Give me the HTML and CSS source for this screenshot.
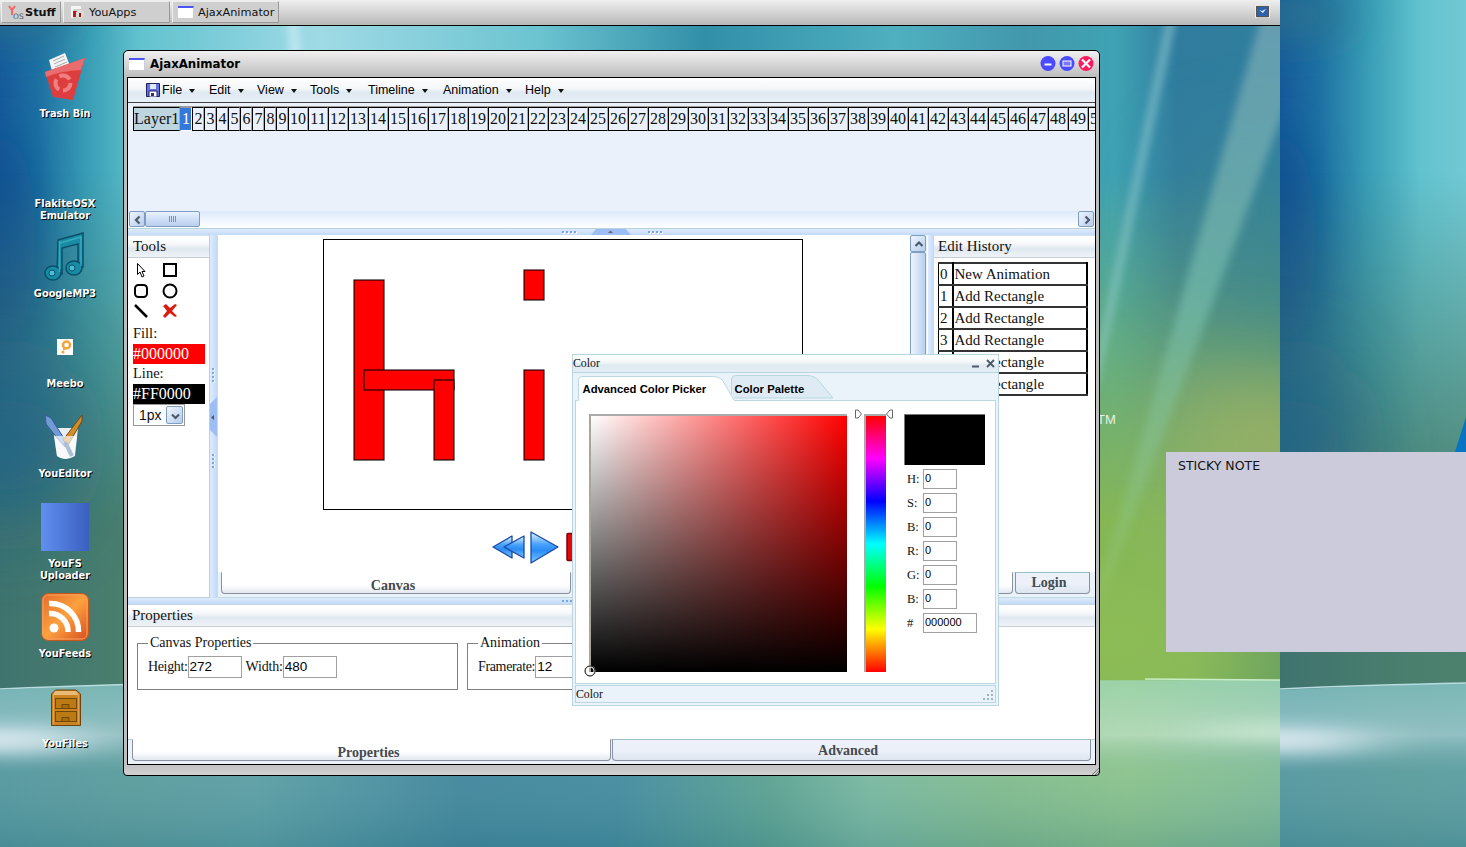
FILE: index.html
```html
<!DOCTYPE html>
<html lang="en">
<head>
<meta charset="utf-8">
<title>YouOS</title>
<link rel="stylesheet" href="styles.css">
</head>
<body>
<svg class="wallpaper" width="1466" height="847" viewBox="0 0 1466 847">
  <defs>
    <filter id="b3" filterUnits="userSpaceOnUse" x="-200" y="-200" width="1700" height="1300"><feGaussianBlur stdDeviation="4"/></filter>
    <filter id="b20" filterUnits="userSpaceOnUse" x="-200" y="-200" width="1700" height="1300"><feGaussianBlur stdDeviation="22"/></filter>
    <filter id="bflat" filterUnits="userSpaceOnUse" x="-200" y="-200" width="1700" height="1300"><feGaussianBlur stdDeviation="40 9"/></filter>
    <filter id="b50" filterUnits="userSpaceOnUse" x="-200" y="-200" width="1700" height="1300"><feGaussianBlur stdDeviation="45"/></filter>
    <linearGradient id="sky"><stop offset="0" stop-color="#155a9a"/><stop offset=".03" stop-color="#1d70a2"/><stop offset=".07" stop-color="#3a9fb6"/><stop offset=".11" stop-color="#62c3cf"/><stop offset=".25" stop-color="#9fdae6"/><stop offset=".42" stop-color="#6cc4d0"/><stop offset=".55" stop-color="#318fa8"/><stop offset=".7" stop-color="#4fb0c0"/><stop offset=".8" stop-color="#4297ac"/><stop offset=".87" stop-color="#3fa3b4"/><stop offset=".92" stop-color="#307c9e"/><stop offset="1" stop-color="#307f9e"/></linearGradient>
    <linearGradient id="land"><stop offset="0" stop-color="#3f736e"/><stop offset=".1" stop-color="#4a7f6e"/><stop offset=".5" stop-color="#5a9068"/><stop offset=".86" stop-color="#85b655"/><stop offset=".93" stop-color="#85b65c"/><stop offset="1" stop-color="#6fa45f"/></linearGradient>
    <linearGradient id="fade" x2="0" y2="1"><stop offset=".25" stop-color="#fff" stop-opacity="0"/><stop offset=".75" stop-color="#fff"/></linearGradient>
    <mask id="lower"><rect width="1280" height="690" fill="url(#fade)"/></mask>
    <linearGradient id="sea"><stop offset="0" stop-color="#589aa2"/><stop offset=".1" stop-color="#5f9fa0"/><stop offset=".2" stop-color="#60a2a8"/><stop offset=".36" stop-color="#4589a0"/><stop offset=".48" stop-color="#478da2"/><stop offset=".6" stop-color="#60a594"/><stop offset=".68" stop-color="#80bda4"/><stop offset=".78" stop-color="#88c090"/><stop offset=".88" stop-color="#91c78e"/><stop offset="1" stop-color="#86bf9b"/></linearGradient>
    <linearGradient id="shine" x2="0" y2="1"><stop offset="0" stop-color="#b8eee0" stop-opacity=".3"/><stop offset=".33" stop-color="#effaff" stop-opacity=".35"/><stop offset=".55" stop-color="#7cb0b0" stop-opacity=".08"/><stop offset="1" stop-color="#1a6575" stop-opacity=".25"/></linearGradient>
    <linearGradient id="ray" x2="0" y2="1"><stop offset="0" stop-color="#8bb1bd" stop-opacity=".6"/><stop offset=".5" stop-color="#78bfae" stop-opacity=".65"/><stop offset="1" stop-color="#98ca75" stop-opacity=".35"/></linearGradient>
    <g id="scene">
      <rect width="1280" height="847" fill="url(#sky)"/>
      <ellipse cx="0" cy="240" rx="35" ry="110" fill="#10508f" filter="url(#b20)" opacity=".7"/>
      <ellipse cx="5" cy="15" rx="70" ry="18" fill="#2d748c" filter="url(#b20)"/>
      <rect width="1280" height="690" fill="url(#land)" mask="url(#lower)"/>
      <ellipse cx="5" cy="445" rx="60" ry="80" fill="#1f628a" filter="url(#b50)" opacity=".85"/>
      <ellipse cx="1265" cy="440" rx="100" ry="65" fill="#9cb365" filter="url(#b50)"/>
      <ellipse cx="1120" cy="640" rx="100" ry="55" fill="#8fbe55" filter="url(#b50)"/>
      <ellipse cx="1240" cy="210" rx="60" ry="65" fill="#438b8f" filter="url(#b50)" opacity=".6"/>
      <path d="M295 0L302 60L290 60L287 0Z" fill="#d9f3fa" opacity=".6" filter="url(#b3)"/>
      <path d="M1168 15L1085 415L1098 380L1176 15Z" fill="#a5d6da" opacity=".6" filter="url(#b3)"/>
      <path d="M1266 0L1100 585L1098 610L1290 95L1295 0Z" fill="url(#ray)" filter="url(#b3)"/>
      <path d="M0 690Q110 684 250 682L1280 680V847H0Z" fill="url(#sea)"/>
      <path d="M0 690Q110 684 250 682L1280 680V847H0Z" fill="url(#shine)"/>
      <ellipse cx="0" cy="741" rx="90" ry="13" fill="#f4faff" opacity=".8" filter="url(#bflat)"/>
      <ellipse cx="1280" cy="731" rx="80" ry="7" fill="#f4ffee" opacity=".6" filter="url(#bflat)"/>
      <path d="M0 689Q110 684 250 682" fill="none" stroke="#b8dce0" stroke-width="1.5"/>
      <path d="M1145 679L1280 680" stroke="#c8efc8" stroke-width="1.500"/>
    </g>
    <clipPath id="tile"><rect width="1280" height="847"/></clipPath>
  </defs>
  <g clip-path="url(#tile)"><use href="#scene"/></g>
  <g transform="translate(1280)" clip-path="url(#tile)"><use href="#scene"/></g>
  <path d="M1466 417L1455 452H1466Z" fill="#0875c4"/>
  <text x="1097" y="424" class="tm">TM</text>
</svg>

<header class="taskbar">
  <div class="task task-start"><svg width="18" height="18"><path d="M2 3L5 7L8 3M5 7V12" fill="none" stroke="#ff6060" stroke-width="2"/><text x="6" y="16" class="os">OS</text></svg><b>Stuff</b></div>
  <div class="task"><svg width="16" height="16"><path d="M2 2h10v3H4v9H2z" fill="#f5f5f5"/><path d="M4 7h7v1H7v5H4z" fill="#c01818"/><circle cx="11" cy="10" r="4" fill="#ddd"/><path d="M10 9h2v4h-2z" fill="#a01010"/></svg><span class="gap-s">YouApps</span></div>
  <div class="task"><i class="winicon"></i><span>AjaxAnimator</span></div>
  <svg class="tray" width="15" height="13"><path d="M1 0V13M14 0V13" stroke="#eee" stroke-width="2"/><rect x="1.5" y="1.500" width="12" height="10" fill="#2f62ad" stroke="#555"/><path d="M4 5l3 1 4-2-3 4z" fill="#e7f2ff"/></svg>
</header>

<nav class="desktop">
  <div class="dicon"><svg width="50" height="50" viewBox="0 0 50 50"><path d="M9 8L25 1L30 14L12 19Z" fill="#f4f4f4"/><path d="M13 9l11-5M14 12l11-5M15 15l12-5" stroke="#aaa"/><path d="M5 20L45 6L33 48L13 45Z" fill="#de3d40"/><path d="M5 20L45 6L41 18Q20 19 6 25Z" fill="#e96d6f"/><circle cx="23" cy="31" r="7.500" fill="none" stroke="#ee8080" stroke-width="4" stroke-dasharray="11.700 4"/></svg><span>Trash Bin</span></div>
  <div class="dicon"><svg width="50" height="50"></svg><span>FlakiteOSX<br>Emulator</span></div>
  <div class="dicon"><svg width="50" height="50" viewBox="0 0 50 50"><g fill="#188ba5" stroke="#0a4f69" stroke-width="1.500"><path d="M18 8L43 1V35H38V12L22 16V42H17Z"/><ellipse cx="13" cy="41" rx="8" ry="7"/><ellipse cx="34" cy="36" rx="8" ry="7"/></g><path d="M19.500 9V40M41 4V34M20 11L41 5" stroke="#38aabf" stroke-width="1.500" fill="none"/><circle cx="12" cy="41" r="3" fill="#46bfd0" stroke="#0a4f69"/><circle cx="32" cy="36" r="3" fill="#46bfd0" stroke="#0a4f69"/></svg><span>GoogleMP3</span></div>
  <div class="dicon"><svg width="50" height="50"><rect x="17" y="17" width="16" height="16" fill="#fff"/><circle cx="26.500" cy="23" r="3.500" fill="none" stroke="#f3a33b" stroke-width="2.500"/><path d="M24 25v3" stroke="#f3a33b" stroke-width="2"/><circle cx="23" cy="30" r="1.500" fill="#f3a33b"/></svg><span>Meebo</span></div>
  <div class="dicon"><svg width="50" height="50" viewBox="0 0 50 50"><path d="M13 16H38L35 44Q25 50 17 44Z" fill="#e8eef1"/><path d="M5 3L11 6L25 28V35L18 27L6 12Z" fill="#719bd5" stroke="#365a96"/><path d="M42 3V9L28 33L23 28Z" fill="#d08d2c" stroke="#79480d"/><path d="M14 24H37L34 44Q25 50 17 44Z" fill="#fff" opacity=".65"/><path d="M25 30L32 44" stroke="#aebfd5" stroke-width="4"/></svg><span>YouEditor</span></div>
  <div class="dicon"><svg width="50" height="50"><defs><linearGradient id="fs"><stop stop-color="#618ff0"/><stop offset="1" stop-color="#3a5fbf"/></linearGradient></defs><rect x="1" y="1" width="48" height="48" fill="url(#fs)"/></svg><span>YouFS<br>Uploader</span></div>
  <div class="dicon"><svg width="50" height="50"><defs><linearGradient id="rss" x2="1" y2="1"><stop stop-color="#e36b2c"/><stop offset=".5" stop-color="#fda13e"/><stop offset="1" stop-color="#d44c20"/></linearGradient></defs><rect x="1.500" y="1.500" width="47" height="47" rx="7" fill="url(#rss)" stroke="#c95618"/><rect x="3" y="3" width="44" height="44" rx="5" fill="none" stroke="#f8a15e"/><circle cx="14" cy="36" r="4.500" fill="#fff"/><path d="M9 21.500A18 18 0 0 1 28 40M9 11.500A28 28 0 0 1 38.500 40" fill="none" stroke="#fff" stroke-width="5.500"/></svg><span>YouFeeds</span></div>
  <div class="dicon"><svg width="50" height="50"><path d="M15.500 8H36L40.500 12V43.500H11.500V12Z" fill="#cc8322" stroke="#6f4210"/><path d="M15 9H36L39 13H13Z" fill="#e9bb76"/><path d="M13.500 13V42M38.500 13V42" stroke="#e2a04a"/><rect x="15.500" y="16.500" width="21" height="10" fill="#bb7a14" stroke="#6e4909"/><rect x="15.500" y="29.500" width="21" height="10" fill="#bb7a14" stroke="#6e4909"/><path d="M22 26v-3.500h7V26M22 39v-3.500h7V39" fill="#a96b0c" stroke="#6e4909"/></svg><span>YouFiles</span></div>
</nav>

<main class="window">
  <div class="titlebar"><i class="winicon"></i><b>AjaxAnimator</b>
    <svg class="winbtns" width="55" height="17"><circle cx="8" cy="8.500" r="7.500" fill="#4a4aff"/><path d="M4.500 9.500h7" stroke="#fff" stroke-width="2"/><circle cx="27" cy="8.500" r="7.500" fill="#4a4aff"/><rect x="23" y="6" width="8" height="5" fill="#7878ff" stroke="#fff"/><circle cx="46" cy="8.500" r="7.500" fill="#ff1a5f"/><path d="M42 4.500l8 8M50 4.500l-8 8" stroke="#fff" stroke-width="2.200"/></svg>
  </div>
  <div class="app">
    <div class="menubar">
      <span class="m-file"><svg width="14" height="14"><path d="M.5.500h13v13H.5z" fill="#6672e0" stroke="#202060"/><path d="M4 1h6v5H4z" fill="#dfe6ff"/><path d="M3 8h8v6H3z" fill="#fff" stroke="#202060"/><path d="M5 10h3v3H5z" fill="#303070"/></svg>File<i></i></span><span class="m-edit">Edit<i></i></span><span class="m-view">View<i></i></span><span class="m-tools">Tools<i></i></span><span class="m-time">Timeline<i></i></span><span class="m-anim">Animation<i></i></span><span>Help<i></i></span>
    </div>
    <div class="timeline">
      <div class="frames"><b>Layer1</b><em>1</em><s>2</s><s>3</s><s>4</s><s>5</s><s>6</s><s>7</s><s>8</s><s>9</s><u>10</u><u>11</u><u>12</u><u>13</u><u>14</u><u>15</u><u>16</u><u>17</u><u>18</u><u>19</u><u>20</u><u>21</u><u>22</u><u>23</u><u>24</u><u>25</u><u>26</u><u>27</u><u>28</u><u>29</u><u>30</u><u>31</u><u>32</u><u>33</u><u>34</u><u>35</u><u>36</u><u>37</u><u>38</u><u>39</u><u>40</u><u>41</u><u>42</u><u>43</u><u>44</u><u>45</u><u>46</u><u>47</u><u>48</u><u>49</u><u>50</u></div>
    </div>
    <div class="hscroll">
      <svg class="sbtn" width="16" height="16"><path d="M9.500 4.500L6 8L9.500 11.500" /></svg><div class="hthumb"><svg width="9" height="6"><path d="M1.500 0v6M3.500 0v6M5.500 0v6M7.500 0v6" stroke="#7a95bd"/></svg></div>
      <svg class="sbtn last" width="16" height="16"><path d="M6.500 4.500L10 8L6.500 11.500"/></svg>
    </div>
    <div class="split-h"><svg width="101" height="6"><path d="M0 3.500h15M86 3.500h15" stroke="#fff" stroke-width="2" stroke-dasharray="2 2" transform="translate(1 .500)"/><path d="M0 3h15M86 3h15" stroke="#7ba3ea" stroke-width="2" stroke-dasharray="2 2"/><path d="M29 6L34 0H64L69 6Z" fill="#9dbdf5"/><path d="M46 4L48.500 1.500L51 4Z" fill="#666"/></svg></div>
    <div class="middle">
      <section class="tools">
        <h2>Tools</h2>
        <div class="toolgrid">
          <svg width="16" height="16"><path d="M4.500 1.500V12.500L7 10L9 15L11 14L9 9.500H12Z" fill="#fff" stroke-width="1"/></svg>
          <svg width="16" height="16"><rect x="2" y="2" width="12" height="12"/></svg>
          <svg width="16" height="16"><rect x="2" y="2" width="12" height="12" rx="3.500"/></svg>
          <svg width="16" height="16"><circle cx="8" cy="8" r="6.500"/></svg>
          <svg width="16" height="16"><path d="M2 2L14 14" stroke-width="2.500"/></svg>
          <svg width="16" height="16"><path d="M1 3L4 1L8 5L13 1L15 2L10 8L15 13L13 14L8 10L3 15L1 13L5 8Z" fill="#d81c10" stroke="none"/></svg>
        </div>
        <p>Fill:</p><div class="swatch red">#000000</div>
        <p>Line:</p><div class="swatch">#FF0000</div>
        <div class="select"><span>1px</span><svg class="sbtn" width="17" height="18"><path d="M5 7.500l3.500 3.500L12 7.500"/></svg></div>
      </section>
      <div class="split-v"><svg width="7" height="101"><path d="M4 .500v15M4 86v15" stroke="#fff" stroke-width="2" stroke-dasharray="2 2"/><path d="M3 0v15M3 86v15" stroke="#7ba3ea" stroke-width="2" stroke-dasharray="2 2"/><path d="M7 29L0 36V62L7 69Z" fill="#9dbdf5"/><path d="M4 47L1 49.500L4 52Z" fill="#555"/></svg></div>
      <section class="stage">
        <div class="stagetop">
          <div class="stagebody">
            <svg class="canvas" width="480" height="271"><rect x=".5" y=".5" width="479" height="270" fill="#fff" stroke="#000"/><g fill="red" stroke="#000" stroke-opacity=".8" stroke-width="1.300"><rect x="31" y="41" width="30" height="180"/><rect x="41" y="131" width="90" height="20"/><rect x="111" y="141" width="20" height="80"/><rect x="201" y="31" width="20" height="30"/><rect x="201" y="131" width="20" height="90"/></g></svg>
            <svg class="transport" width="130" height="34"><defs><linearGradient id="bl" x2="0" y2="1"><stop offset=".1" stop-color="#bfe3ff"/><stop offset=".4" stop-color="#48a1fb"/><stop offset=".6" stop-color="#2b8cf5"/><stop offset="1" stop-color="#7cc8ff"/></linearGradient></defs><g fill="url(#bl)" stroke="#1c4aa5" stroke-width="1.300" stroke-linejoin="round"><path d="M1 17L20 6V28Z"/><path d="M12 17L32 6V28Z"/><path d="M39 2V33L66 17Z"/></g><rect x="75" y="3.500" width="27" height="27" rx="1" fill="#e00808" stroke="#7c0505" stroke-width="1.500"/></svg>
          </div>
          <div class="vscroll"><svg class="sbtn" width="16" height="17"><path d="M4.500 10L8 6.500L11.500 10"/></svg><div class="vthumb"></div></div>
        </div>
        <div class="tabs"><div class="tab on w1">Canvas</div><div class="tab w2"></div></div>
      </section>
      <div class="split-v plain"></div>
      <section class="history">
        <h2>Edit History</h2>
        <div class="hbody"><table><tr><td>0</td><td>New Animation</td></tr><tr><td>1</td><td>Add Rectangle</td></tr><tr><td>2</td><td>Add Rectangle</td></tr><tr><td>3</td><td>Add Rectangle</td></tr><tr><td>4</td><td>Add Rectangle</td></tr><tr><td>5</td><td>Add Rectangle</td></tr></table></div>
        <div class="tabs"><div class="tab on w3"></div><div class="tab w3">Login</div></div>
      </section>
    </div>
    <div class="split-h low"><svg width="101" height="6"><path d="M0 3h15" stroke="#7ba3ea" stroke-width="2" stroke-dasharray="2 2"/></svg></div>
    <section class="props">
      <h2>Properties</h2>
      <div class="sets">
        <fieldset><legend>Canvas Properties</legend><label>Height:<input value="272"></label><label>Width:<input value="480"></label></fieldset>
        <fieldset><legend>Animation</legend><label>Framerate:<input value="12"></label></fieldset>
      </div>
      <div class="tabs"><div class="tab on w4">Properties</div><div class="tab w4 off">Advanced</div></div>
    </section>
  </div>
  <svg class="grip" width="8" height="8"><path d="M1 8L8 1M4 8L8 4" stroke="#777"/></svg>
</main>

<section class="dialog">
  <div class="dtitle">Color<svg width="26" height="12"><path d="M2 9.500h7" stroke="#4a5868" stroke-width="2"/><path d="M17 3l7 7M24 3l-7 7" stroke="#4a5868" stroke-width="1.800"/></svg></div>
  <div class="dtabs"><svg width="300" height="28"><path d="M155.500 23V6Q156 2.500 160 2.500H231Q239 2.500 243 8L257 25H156Z" fill="#dfebf4" stroke="#b9d8e2"/><path d="M2.500 28V7Q2.500 3.500 7 3.500H136Q144 3.500 147 8L158 25V28Z" fill="#fff"/><path d="M2.500 27V7Q2.500 3.500 7 3.500H136Q144 3.500 147 8L158 27" fill="none" stroke="#b9d8e2"/><text x="6.500" y="20">Advanced Color Picker</text><text x="158.500" y="20">Color Palette</text></svg></div>
  <div class="dbody">
    <div class="sv"><svg class="knob" width="12" height="12"><circle cx="6" cy="6" r="4.500" fill="none" stroke="#fff" stroke-width="2"/><circle cx="6" cy="6" r="5" fill="none" stroke="#000"/></svg></div>
    <div class="hue"><svg class="arrows" width="42" height="10"><path d="M3.500 1H6L9.500 5L6 9H3.500ZM40.500 1H38L34.500 5L38 9H40.500Z" fill="#fff" stroke="#666"/></svg></div>
    <div class="fields"><div class="preview"></div>
      <label>H:<input value="0"></label><label>S:<input value="0"></label><label>B:<input value="0"></label><label>R:<input value="0"></label><label>G:<input value="0"></label><label>B:<input value="0"></label><label>#<input class="hex" value="000000"></label>
    </div>
  </div>
  <div class="dfoot">Color<svg width="12" height="12"><path d="M9 2h2M5 6h2M9 6h2M1 10h2M5 10h2M9 10h2" stroke="#9db3bd" stroke-width="2"/></svg></div>
</section>

<aside class="sticky">STICKY NOTE</aside>
</body>
</html>
```
FILE: styles.css
```css
* { box-sizing: border-box; }
body { margin: 0; width: 1466px; height: 847px; overflow: hidden; position: relative; font-family: "Liberation Serif", serif; color: #111; }
svg { display: block; flex: none; }
h2, p { margin: 0; font-weight: normal; }
.wallpaper { position: absolute; left: 0; top: 0; }
.tm { font: 13px "Liberation Sans", sans-serif; fill: #e3f0e3; }

.taskbar { position: relative; width: 1280px; height: 26px; display: flex; gap: 2px; padding: 1px 0 0 1px; background: linear-gradient(#efefef, #b9b9b9); border-bottom: 1px solid #000; font: 11.300px "DejaVu Sans", sans-serif; }
.task { width: 107px; height: 22px; display: flex; align-items: center; gap: 4px; padding-left: 5px; background: #cfcfcf; border: 1px solid #eee; border-right-color: #999; border-bottom-color: #999; white-space: nowrap; }
.task-start { width: 60px; padding-left: 5px; gap: 0; }
.os { font: 7.500px "DejaVu Sans", sans-serif; fill: #555; }
.tray { margin: 4px 10px 0 auto; }
.winicon { width: 16px; height: 12px; flex: none; background: #fff; border-top: 2px solid #4b55f5; border-right: 1px solid #ccd; }

.desktop { position: absolute; left: 10px; top: 52px; width: 110px; }
.dicon { height: 90px; display: flex; flex-direction: column; align-items: center; font: bold 9.800px/12px "DejaVu Sans", sans-serif; color: #fff; text-shadow: 1px 1px 0 #000; text-align: center; }
.dicon span { margin-top: 6px; }

.window { position: absolute; left: 123px; top: 50px; width: 977px; height: 726px; border: 1px solid #000; border-radius: 5px 5px 4px 4px; padding: 0 3px; background: linear-gradient(#f0f0f0, #bdbdbd 26px, #bfbfbf 712px, #d2d2d2); }
.titlebar { height: 26px; display: flex; align-items: center; padding: 1px 0 0 2px; font: 12px "DejaVu Sans", sans-serif; gap: 5px; color: #000; }
.titlebar b { font-size: 11.800px; margin-top: -1px; }
.titlebar .winicon { margin-top: -2px; }
.winbtns { margin: -2px 1px 0 auto; }
.grip { position: absolute; right: 0; bottom: 0; }
.app { width: 969px; height: 688px; border: 1px solid #000; background: #fff; overflow: hidden; display: flex; flex-direction: column; }
.app > * { flex: none; }

.menubar { height: 25px; display: flex; align-items: center; padding-left: 18px; background: linear-gradient(#fff, #f3f6f8 45%, #dfe9f2 60%, #e8f0f8); border-bottom: 1px solid #444; font: 12.500px "Liberation Sans", sans-serif; color: #000; }
.menubar span { display: flex; align-items: center; white-space: nowrap; }
.menubar svg { margin-right: 2px; }
.menubar i { border: 3.500px solid transparent; border-top: 4px solid #111; border-bottom: 0; margin: 1px 0 0 7px; }
.m-file { width: 63px; } .m-edit { width: 48px; } .m-view { width: 53px; } .m-tools { width: 58px; } .m-time { width: 75px; } .m-anim { width: 82px; }

.timeline { height: 108px; background: #eaf1fa; padding: 3px 0 0 5px; overflow: hidden; }
.frames { display: flex; width: 1100px; height: 25px; font-size: 16px; line-height: 21px; border-top: 1px solid #999; }
.frames > * { flex: none; font-weight: normal; font-style: normal; text-decoration: none; border: 1px solid #000; border-right-color: #aaa; width: 20px; text-align: center; height: 24px; }
.frames > s { width: 12px; padding-left: 1px; }
.frames > b { width: 47px; background: #bdd5de; }
.frames > em { width: 12px; background: #3478dc; color: #fff; border-color: #999 #fff #fff #3478dc; }

.hscroll { height: 18px; display: flex; align-items: center; padding: 0 1px 1px; background: linear-gradient(#dceafc, #fff); border-bottom: 1px solid #b9d3de; }
.sbtn { background: linear-gradient(135deg, #eef5ff, #b7cdea); border: 1px solid #7f9dc0; border-radius: 2px; fill: none; stroke: #4c5a6b; stroke-width: 2.200; }
.last { margin-left: auto; }
.hthumb { width: 55px; height: 16px; display: flex; align-items: center; justify-content: center; border: 1px solid #7f9dc0; border-radius: 2px; background: linear-gradient(#e9f2fe, #b9cfee); }
.split-h { height: 6px; background: linear-gradient(#dfebfb, #c2daf8); padding-left: 434px; }

.middle { height: 363px; display: flex; background: #c8dcf8; }
h2 { height: 23px; padding-left: 4px; font-size: 15px; line-height: 21px; background: linear-gradient(#fff 10%, #f5f7f9 40%, #dfe8f0 60%, #eef3f7); border-top: 1px solid #d6e2ee; border-bottom: 1px solid #c3cfd5; }
.tools { width: 82px; background: #fff; border-right: 1px solid #b8d2dd; border-bottom: 1px solid #b8d2dd; }
.tools h2 { padding-left: 5px; }
.toolgrid { display: grid; grid-template-columns: 29px 16px; grid-auto-rows: 20.500px; align-items: center; padding: 2px 0 0 5px; margin-bottom: 2.500px; }
.toolgrid svg { fill: none; stroke: #000; stroke-width: 2; }
.tools p { height: 20px; padding-left: 5px; font-size: 14.500px; line-height: 19px; }
.swatch { margin-left: 5px; width: 72px; height: 20px; background: #000; color: #fff; font-size: 16px; line-height: 19px; }
.red { background: red; }
.select { margin-left: 5px; width: 52px; height: 22px; border: 1px solid #999; display: flex; align-items: center; justify-content: space-between; padding: 0 1px 0 5px; font: 14px "Liberation Sans", sans-serif; background: #fff; }
.split-v { width: 7px; background: linear-gradient(90deg, #dfebfb, #c2daf8); padding-top: 133px; }
.plain { width: 6px; }
.stage { width: 711px; display: flex; flex-direction: column; background: #fff; border-left: 1px solid #c5dfea; }
.stagetop { height: 337px; display: flex; }
.stagebody { width: 692px; padding: 4px 0 0 105px; }
.transport { margin: 20px 0 0 169px; }
.vscroll { width: 17px; background: #e9f2fd; }
.vthumb { width: 16px; height: 322px; border: 1px solid #7f9dc0; border-radius: 2px; background: linear-gradient(90deg, #edf5ff, #b9cfee); }
.tabs { height: 26px; display: flex; gap: 2px; padding-left: 4px; background: #eaf2f9; border-bottom: 1px solid #c0dae2; }
.stage .tabs { padding-left: 3px; }
.tab { height: 22px; border: 1px solid #8a91a3; border-top-color: #a0bdcc; border-radius: 0 0 4px 4px; background: linear-gradient(#ebf0f9 55%, #dde5ef); font-weight: bold; font-size: 14px; line-height: 20px; text-align: center; color: #444a50; padding-right: 7px; }
.on { border-top-color: #fff; background: linear-gradient(#fff 60%, #e2e8f0); line-height: 25px; padding-right: 6px; }
.w1 { width: 350px; } .w2 { flex: 1; } .w3 { width: 75px; } .w4 { width: 479px; }
.history { width: 161px; display: flex; flex-direction: column; background: #fff; }
.hbody { height: 314px; padding: 4px 0 0 4px; }
table { width: 150px; border-collapse: collapse; border: 1px solid #000; border-top: 2px solid #333; border-right-width: 2px; font-size: 15px; line-height: 17px; }
td { padding: 2px 0 1px 1px; height: 22px; border: 1px solid #000; border-bottom-width: 2px; border-bottom-color: #333; }
td:first-child { width: 14px; border-right-width: 2px; }

.low { height: 7px; border-bottom: 1px solid #c4d7e2; }
.props { height: 159px; display: flex; flex-direction: column; }
.props h2 { height: 22px; line-height: 21px; border-top: 0; flex: none; }
.sets { height: 112px; display: flex; gap: 9px; padding: 7px 0 0 9px; flex: none; }
fieldset { margin: 0; width: 321px; height: 56px; min-width: 0; padding: 4px 0 0 10px; border: 1px solid #808080; font-size: 14px; line-height: 18px; }
fieldset label { float: left; display: flex; align-items: center; margin-right: 4px; letter-spacing: -.35px; }
fieldset label + label { letter-spacing: -.2px; }
fieldset input { width: 54px; height: 22px; }
legend { padding: 0 2px; margin-left: 0; }
input { border: 1px solid #a0a0a0; background: #fff; padding: 0 1px 2px; font: 13.500px "Liberation Sans", sans-serif; color: #000; }
.props .tabs { border-bottom: 0; border-top: 1px solid #b9cdd6; height: 25px; gap: 1px; }
.props .tab { margin-top: -1px; }
.props .off { line-height: 21px; }

.dialog { position: absolute; left: 572px; top: 354px; width: 427px; height: 352px; border: 1px solid #b9d5e0; background: #eaf2fa; }
.dtitle { height: 18px; display: flex; align-items: center; justify-content: space-between; padding: 0 2px 1px 0; background: linear-gradient(#fff, #f5f8fa 40%, #dfe9f0 60%, #e4edf4); border-bottom: 1px solid #b9d5e0; font-size: 11.800px; }
.dtabs { height: 27px; padding-left: 3px; }
.dtabs svg { position: relative; z-index: 1; }
.dtabs text { font: bold 11.300px "Liberation Sans", sans-serif; fill: #000; }
.dbody { margin: 0 2px; height: 284px; border: 1px solid #b9d8e2; background: #fff; display: flex; padding: 13px 0 0 13px; }
.sv { position: relative; width: 258px; height: 258px; border-left: 2px solid #a9a698; border-top: 2px solid #aaa; background: linear-gradient(transparent, #000), linear-gradient(90deg, #fff, red); background-origin: padding-box; }
.knob { position: absolute; left: -7px; top: 249px; }
.hue { position: relative; margin-left: 17px; width: 22px; height: 258px; border-left: 2px solid #aaa; border-top: 2px solid #aaa; background: linear-gradient(red, #f0f 16.600%, #00f 33.300%, #0ff 50%, #0f0 66.600%, #ff0 83.300%, red); }
.arrows { position: absolute; left: -14px; top: -7px; }
.fields { margin-left: 18px; font-size: 12.500px; }
.preview { width: 81px; height: 51px; background: #000; border: 1px solid #777; border-width: 1px 0 0 1px; margin-bottom: 4px; }
.fields label { display: grid; grid-template-columns: 16px auto; justify-content: start; align-items: center; height: 20px; margin: 0 0 4px 3px; }
.fields input { width: 34px; height: 20px; font-size: 11px; }
.fields .hex { width: 54px; }
.dfoot { margin: 1px 2px 0; height: 18px; display: flex; align-items: center; justify-content: space-between; border: 1px solid #b9d8e2; font-size: 11.800px; padding: 1px 1px 0 0; }

.sticky { position: absolute; left: 1166px; top: 452px; width: 300px; height: 200px; padding: 6px 12px; background: #cccbdc; font: 12.500px "DejaVu Sans", sans-serif; line-height: 16px; color: #111; }
```
